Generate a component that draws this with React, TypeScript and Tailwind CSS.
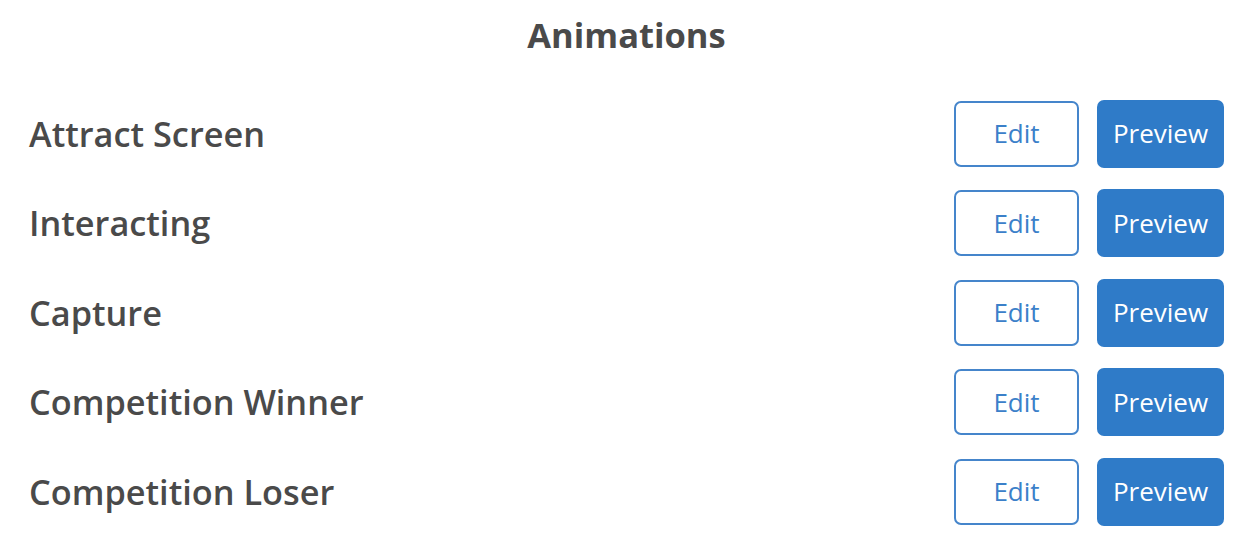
import React from "react";

const animations = [
  "Attract Screen",
  "Interacting",
  "Capture",
  "Competition Winner",
  "Competition Loser",
];

function AnimationRow({ name }: { name: string }) {
  return (
    <div className="flex items-center justify-between h-[67px]">
      <span className="text-[34.3px] font-semibold text-[#4a4a4a]">{name}</span>
      <div className="flex items-center gap-[18px]">
        <button className="w-[125px] h-[66px] rounded-[7px] border-2 border-[#4585cb] bg-white text-[26px] text-[#3b80c9]">
          Edit
        </button>
        <button className="w-[127px] h-[68px] rounded-[7px] bg-[#2f7bc8] text-[26px] text-white">
          Preview
        </button>
      </div>
    </div>
  );
}

export default function App() {
  return (
    <div
      className="w-[1251px] h-[553px] bg-white pl-[29px] pr-[27px] pt-[12px]"
      style={{ fontFamily: '"Open Sans", sans-serif' }}
    >
      <h1 className="text-center text-[34.5px] font-bold text-[#4a4a4a] leading-[46px] mb-[42px]">
        Animations
      </h1>
      <div className="flex flex-col gap-[22.5px]">
        {animations.map((name) => (
          <AnimationRow key={name} name={name} />
        ))}
      </div>
    </div>
  );
}
